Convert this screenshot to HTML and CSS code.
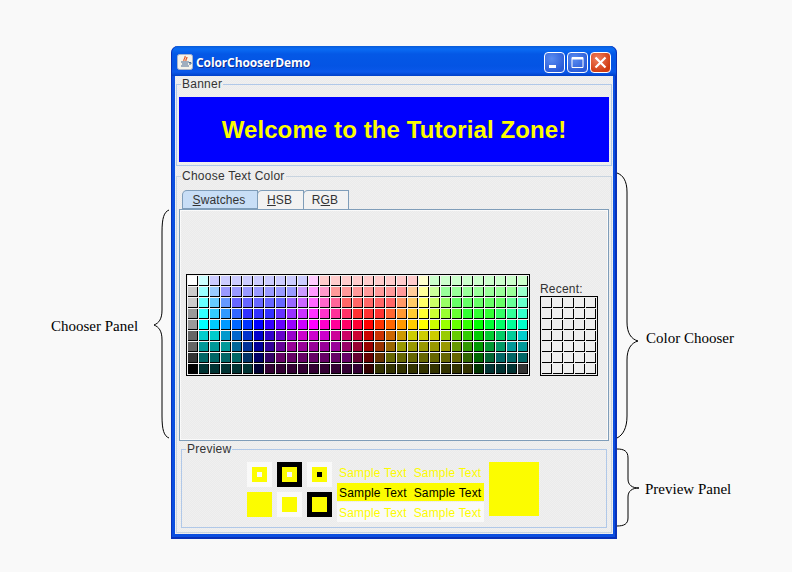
FILE: index.html
```html
<!DOCTYPE html>
<html lang="en">
<head>
<meta charset="utf-8">
<title>ColorChooserDemo</title>
<link rel="stylesheet" href="styles.css">
</head>
<body>
<div class="window">
  <div class="titlebar">
    <svg class="app-icon" width="16" height="16" viewBox="0 0 16 16">
      <rect x="0.5" y="0.5" width="15" height="15" rx="2" fill="#f4f2ea" stroke="#a8b4cc"/>
      <path d="M8 2c1 2-2 3-1 5M10 3c0 2-1.500 2-1 4" fill="none" stroke="#e0501c" stroke-width="1.200"/>
      <path d="M4 8h8M5 10h6M4 12h8" stroke="#4a6a94" stroke-width="1.100"/>
      <path d="M12 8.500h2v1.500h-2" fill="none" stroke="#4a6a94"/>
    </svg>
    <span class="title-text">ColorChooserDemo</span>
    <div class="win-buttons">
      <div class="win-btn btn-blue"><svg width="21" height="21" viewBox="0 0 21 21"><rect x="5" y="13" width="7" height="3" fill="#fff"/></svg></div>
      <div class="win-btn btn-blue"><svg width="21" height="21" viewBox="0 0 21 21"><path d="M5 5.500h11v10H5z" fill="none" stroke="#fff" stroke-width="1"/><rect x="5" y="5" width="11" height="2.500" fill="#fff"/></svg></div>
      <div class="win-btn btn-red"><svg width="21" height="21" viewBox="0 0 21 21"><path d="M5.500 5.500l10 10M15.500 5.500l-10 10" stroke="#fff" stroke-width="2.200"/></svg></div>
    </div>
  </div>
  <div class="client">
    <fieldset class="group banner-group">
      <legend class="group-title">Banner</legend>
      <div class="banner">Welcome to the Tutorial Zone!</div>
    </fieldset>
    <fieldset class="group chooser-group">
      <legend class="group-title">Choose Text Color</legend>
      <div class="tabs">
        <div class="tab tab-active"><u>S</u>watches</div>
        <div class="tab tab-hsb"><u>H</u>SB</div>
        <div class="tab tab-rgb">R<u>G</u>B</div>
      </div>
      <div class="tab-body">
        <div class="swatch-wrap">
          <div class="swatches" id="main"></div>
          <div class="recent-col">
            <div class="recent-label">Recent:</div>
            <div class="swatches" id="recent"></div>
          </div>
        </div>
      </div>
      <fieldset class="group preview-group">
        <legend class="group-title">Preview</legend>
        <div class="preview">
          <div class="squares">
            <div class="sq outer-white"><div class="in-yellow"><div class="dot-white"></div></div></div>
            <div class="sq outer-black"><div class="in-yellow"><div class="dot-white"></div></div></div>
            <div class="sq outer-white"><div class="in-yellow"><div class="dot-black"></div></div></div>
            <div class="sq outer-yellow"></div>
            <div class="sq outer-white"><div class="in-yellow"></div></div>
            <div class="sq outer-black"><div class="in-yellow"></div></div>
          </div>
          <div class="samples">
            <div class="sample s1">Sample Text&nbsp; Sample Text</div>
            <div class="sample s2">Sample Text&nbsp; Sample Text</div>
            <div class="sample s3">Sample Text&nbsp; Sample Text</div>
          </div>
          <div class="big-yellow"></div>
        </div>
      </fieldset>
    </fieldset>
  </div>
</div>

<svg class="braces" width="792" height="572" viewBox="0 0 792 572">
  <g fill="none" stroke="#000" stroke-width="1">
    <path d="M169 210C164 212 162 218 162 232V310C162 319 159 323 154 325C159 327 162 331 162 340V416C162 430 164 436 169 438"/>
    <path d="M617 173C623 175 627 181 627 192V322C627 333 631 339 638 341C631 343 627 349 627 360V416C627 428 623 435 617 438"/>
    <path d="M617 449C624 449 628 451 628 458V479C628 485 632 488 639 488C632 488 628 491 628 497V518C628 524 624 526 617 526"/>
  </g>
</svg>
<div class="note note-chooser">Chooser Panel</div>
<div class="note note-color">Color Chooser</div>
<div class="note note-preview">Preview Panel</div>
<script src="swatches.js"></script>
</body>
</html>
```
FILE: styles.css
```css
* { box-sizing: border-box; }
html, body { margin: 0; height: 100%; }
body {
  background: #f9f9f9;
  padding: 46px 0 0 171px;
  font-family: "Liberation Sans", Arial, sans-serif;
  font-size: 12px;
  color: #333;
  overflow: hidden;
}
.window {
  width: 446px;
  height: 493px;
  background: #0a4ee0;
  border-radius: 7px 7px 0 0;
  padding: 0 4px 5px;
  display: flex;
  flex-direction: column;
  box-shadow: inset 1px 0 #0831b8, inset -2px 0 #0831b8, inset 0 -2px #0831b8;
}
.titlebar {
  height: 30px;
  margin: 0 -3px;
  flex: none;
  border-radius: 7px 7px 0 0;
  background: linear-gradient(#0a5cd8 0, #0a6cf4 3px, #0458e6 8px, #0454e4 20px, #0a58ea 26px, #0040c8 30px);
  display: flex;
  align-items: center;
  padding: 2px 5px 0 5px;
}
.app-icon { flex: none; }
.title-text {
  margin-left: 3px;
  color: #fff;
  font-family: "Open Sans", sans-serif;
  font-weight: 700;
  font-size: 12px;
  letter-spacing: -0.1px;
  text-shadow: 1px 1px #0a2a90;
}
.win-buttons { margin-left: auto; display: flex; gap: 2px; }
.win-btn {
  width: 21px;
  height: 21px;
  border: 1px solid #fff;
  border-radius: 4px;
  overflow: hidden;
}
.win-btn svg { display: block; margin: -1px; }
.btn-blue { background: radial-gradient(circle at 35% 30%, #5a8cf0, #2a5cd8 75%); }
.btn-red { background: radial-gradient(circle at 35% 30%, #f08060, #d03a10 75%); }
.client {
  flex: 1;
  background: repeating-conic-gradient(#f0f0f0 0 25%, #ebebeb 0 50%) 0 0 / 2px 2px;
  padding: 1px 1px 1px;
  display: flex;
  flex-direction: column;
}
.group {
  margin: 0;
  padding: 0;
  min-width: 0;
  border: 1px solid #b0c8e8;
}
.group-title {
  margin: 0 0 0 2px;
  padding: 0 1px;
  color: #333;
  font-size: 12px;
  letter-spacing: 0.24px;
  line-height: 14px;
  height: 14px;
}
.banner-group { height: 89px; padding: 6px 2px 2px; }
.banner {
  height: 65px;
  background: #0000ff;
  color: #fcfc00;
  font-weight: 700;
  font-size: 24px;
  letter-spacing: 0.1px;
  display: flex;
  align-items: center;
  justify-content: center;
}
.chooser-group {
  margin-top: 3px;
  height: 364px;
  padding: 7px 2px 0;
  border-color: #c8d4e0;
}
.tabs { display: flex; height: 20px; padding-left: 3px; position: relative; z-index: 1; }
.tab {
  border: 1px solid #7f9db9;
  border-bottom: 0;
  border-top-left-radius: 5px;
  height: 19px;
  text-align: center;
  line-height: 18px;
  margin-right: -1px;
  letter-spacing: 0.1px;
  background: #f2f2f2;
}
.tab-active { width: 76px; padding-right: 2px; background: #c8def6; border-bottom: 2px solid #7f9db9; height: 20px; }
.tab-hsb { width: 47px; padding-right: 2px; }
.tab-rgb { width: 46px; padding-right: 2px; }
.tab-body {
  height: 232px;
  border: 1px solid #7f9db9;
  box-shadow: inset 0 0 0 1px #fafafa;
  margin-top: -1px;
  display: flex;
  align-items: center;
  padding: 0 0 0 6px;
}
.swatch-wrap { display: flex; align-items: flex-end; gap: 10px; }
.swatches {
  display: grid;
  gap: 1px;
  border: 1px solid #000;
  padding: 1px;
  background: #f4f4f4;
}
#main { grid-template-columns: repeat(31, 10px); grid-auto-rows: 10px; }
#recent { grid-template-columns: repeat(5, 10px); grid-auto-rows: 10px; background: #eeeeee; }
.cell { border-right: 1px solid #000; border-bottom: 1px solid #000; }
.recent-col { display: flex; flex-direction: column; }
.recent-label { line-height: 14px; letter-spacing: 0.2px; }
.preview-group {
  margin: 1px 2px 0;
  height: 86px;
  padding: 6px 0 0;
}
.preview-group .group-title { margin-left: 4px; }
.preview { display: flex; align-items: flex-start; margin-left: 65px; }
.squares { display: grid; grid-template-columns: repeat(3, 25px); grid-auto-rows: 25px; gap: 5px; }
.sq { display: flex; align-items: center; justify-content: center; }
.outer-white { background: #f9f9f9; }
.outer-black { background: #000; }
.outer-yellow { background: #fcfc00; }
.in-yellow { width: 15px; height: 15px; background: #fcfc00; display: flex; align-items: center; justify-content: center; }
.dot-white { width: 5px; height: 5px; background: #f9f9f9; }
.dot-black { width: 5px; height: 5px; background: #000; }
.samples { margin-left: 5px; width: 147px; }
.sample { height: 20px; line-height: 23px; padding-left: 2px; color: #fcfc00; letter-spacing: 0.17px; white-space: nowrap; }
.s1 { height: 21px; }
.s2 { background: #fcfc00; color: #000; height: 18px; line-height: 21px; }
.s3 { background: #f9f9f9; margin-top: 1px; }
.big-yellow { margin-left: 5px; width: 50px; height: 54px; background: #fcfc00; }
.braces { position: absolute; left: 0; top: 0; pointer-events: none; }
.note {
  position: absolute;
  font-family: "Liberation Serif", "Times New Roman", serif;
  font-size: 15px;
  line-height: 18px;
  color: #000;
  white-space: nowrap;
}
.note-chooser { left: 51px; top: 317px; }
.note-color { left: 646px; top: 329px; }
.note-preview { left: 645px; top: 480px; }
```
FILE: swatches.js
```js
// Swatch palette: each row is a run-length list of [r, g, b, count].
var S = 255, C = 204, N = 153, L = 102, T = 51, Z = 0;
var rows = [
  [[S,S,S,1],[C,S,S,1],[C,C,S,9],[S,C,S,1],[S,C,C,9],[S,S,C,1],[C,S,C,9]],
  [[C,C,C,1],[N,S,S,1],[N,C,S,1],[N,N,S,7],[C,N,S,1],[S,N,S,1],[S,N,C,1],[S,N,N,7],[S,C,N,1],[S,S,N,1],[C,S,N,1],[N,S,N,7],[N,S,C,1]],
  [[C,C,C,1],[L,S,S,1],[L,C,S,1],[L,N,S,1],[L,L,S,5],[N,L,S,1],[C,L,S,1],[S,L,S,1],[S,L,C,1],[S,L,N,1],[S,L,L,5],[S,N,L,1],[S,C,L,1],[S,S,L,1],[C,S,L,1],[N,S,L,1],[L,S,L,5],[L,S,N,1],[L,S,C,1]],
  [[N,N,N,1],[T,S,S,1],[T,C,S,1],[T,N,S,1],[T,L,S,1],[T,T,S,3],[L,T,S,1],[N,T,S,1],[C,T,S,1],[S,T,S,1],[S,T,C,1],[S,T,N,1],[S,T,L,1],[S,T,T,3],[S,L,T,1],[S,N,T,1],[S,C,T,1],[S,S,T,1],[C,S,T,1],[N,S,T,1],[L,S,T,1],[T,S,T,3],[T,S,L,1],[T,S,N,1],[T,S,C,1]],
  [[N,N,N,1],[Z,S,S,1],[Z,C,S,1],[Z,N,S,1],[Z,L,S,1],[Z,T,S,1],[Z,Z,S,1],[T,Z,S,1],[L,Z,S,1],[N,Z,S,1],[C,Z,S,1],[S,Z,S,1],[S,Z,C,1],[S,Z,N,1],[S,Z,L,1],[S,Z,T,1],[S,Z,Z,1],[S,T,Z,1],[S,L,Z,1],[S,N,Z,1],[S,C,Z,1],[S,S,Z,1],[C,S,Z,1],[N,S,Z,1],[L,S,Z,1],[T,S,Z,1],[Z,S,Z,1],[Z,S,T,1],[Z,S,L,1],[Z,S,N,1],[Z,S,C,1]],
  [[L,L,L,1],[Z,C,C,2],[Z,N,C,1],[Z,L,C,1],[Z,T,C,1],[Z,Z,C,1],[T,Z,C,1],[L,Z,C,1],[N,Z,C,1],[C,Z,C,3],[C,Z,N,1],[C,Z,L,1],[C,Z,T,1],[C,Z,Z,1],[C,T,Z,1],[C,L,Z,1],[C,N,Z,1],[C,C,Z,3],[N,C,Z,1],[L,C,Z,1],[T,C,Z,1],[Z,C,Z,1],[Z,C,T,1],[Z,C,L,1],[Z,C,N,1],[Z,C,C,1]],
  [[L,L,L,1],[Z,N,N,3],[Z,L,N,1],[Z,T,N,1],[Z,Z,N,1],[T,Z,N,1],[L,Z,N,1],[N,Z,N,5],[N,Z,L,1],[N,Z,T,1],[N,Z,Z,1],[N,T,Z,1],[N,L,Z,1],[N,N,Z,5],[L,N,Z,1],[T,N,Z,1],[Z,N,Z,1],[Z,N,T,1],[Z,N,L,1],[Z,N,N,2]],
  [[T,T,T,1],[Z,L,L,4],[Z,T,L,1],[Z,Z,L,1],[T,Z,L,1],[L,Z,L,7],[L,Z,T,1],[L,Z,Z,1],[L,T,Z,1],[L,L,Z,7],[T,L,Z,1],[Z,L,Z,1],[Z,L,T,1],[Z,L,L,3]],
  [[Z,Z,Z,1],[Z,T,T,5],[Z,Z,T,1],[T,Z,T,9],[T,Z,Z,1],[T,T,Z,9],[Z,T,Z,1],[Z,T,T,3],[T,T,T,1]]
];
var main = document.getElementById('main');
rows.forEach(function (row) {
  row.forEach(function (run) {
    for (var i = 0; i < run[3]; i++) {
      var cell = document.createElement('div');
      cell.className = 'cell';
      cell.style.background = 'rgb(' + run[0] + ',' + run[1] + ',' + run[2] + ')';
      main.appendChild(cell);
    }
  });
});
var recent = document.getElementById('recent');
for (var n = 0; n < 35; n++) {
  var r = document.createElement('div');
  r.className = 'cell';
  recent.appendChild(r);
}
```
